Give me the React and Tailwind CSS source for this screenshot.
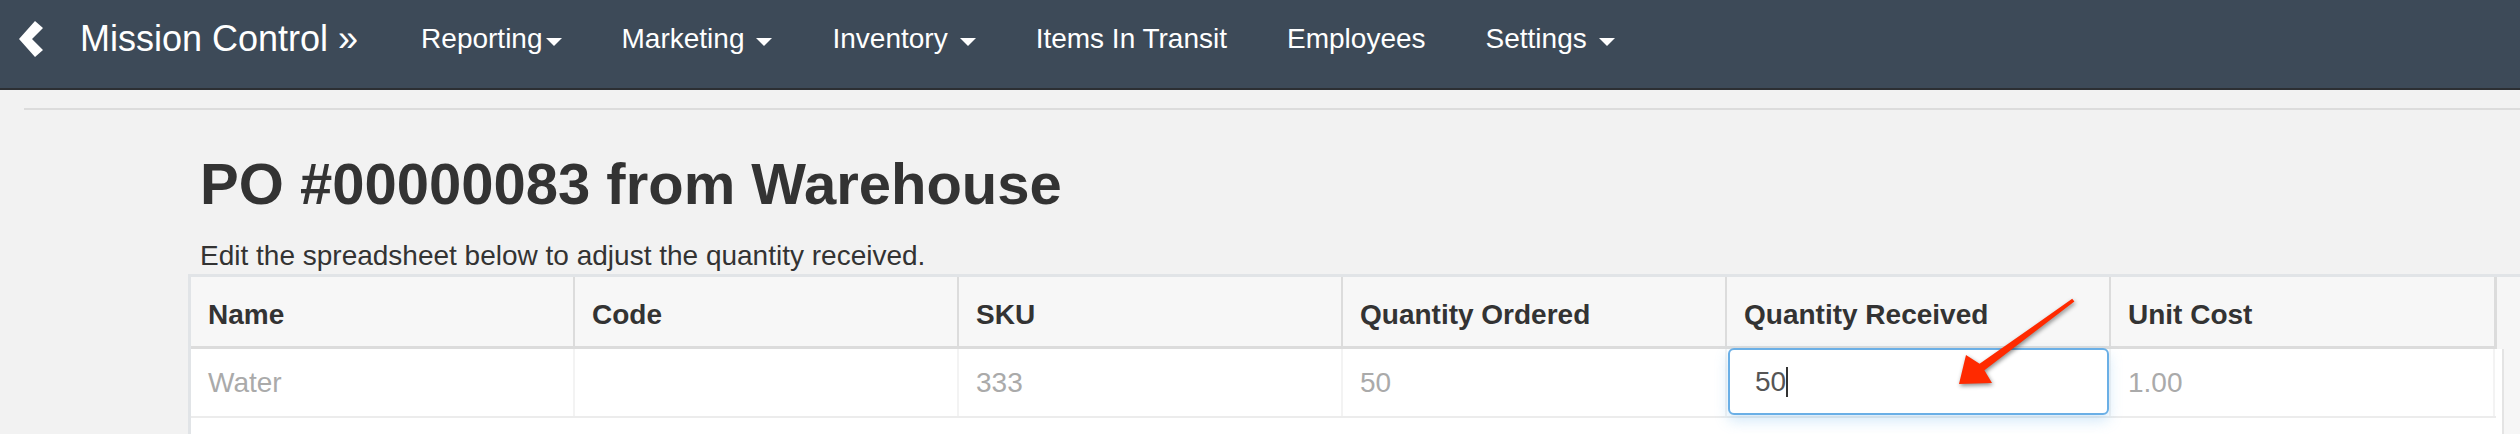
const navItems = [
  { label: "Reporting", caret: "tight" },
  { label: "Marketing", caret: "space" },
  { label: "Inventory", caret: "space" },
  { label: "Items In Transit" },
  { label: "Employees" },
  { label: "Settings", caret: "space" },
];

const columns = ["Name", "Code", "SKU", "Quantity Ordered", "Quantity Received", "Unit Cost"];
const row = ["Water", "", "333", "50", null, "1.00"];

function Caret({ tight }) {
  return (
    <span
      className={`mt-[6px] w-0 h-0 border-l-[8px] border-r-[8px] border-t-[8px] border-l-transparent border-r-transparent border-t-white ${
        tight ? "ml-[3px]" : "ml-[12px]"
      }`}
    />
  );
}

export default function App() {
  return (
    <div className="relative w-full h-[434px] overflow-hidden bg-[#f2f2f2] font-['Liberation_Sans',Arial,sans-serif]">
      {/* navbar */}
      <nav className="h-[90px] bg-[#3d4a58] border-b-2 border-[#2c2f33] flex items-center pb-[11px] text-white">
        <svg width="24" height="36" viewBox="0 0 24 36" className="ml-[19px] shrink-0">
          <polygon points="0,18 16,0 24,7 13,18 24,29 16,36" fill="#fff" />
        </svg>
        <span className="ml-[37px] text-[36px] leading-none whitespace-nowrap">Mission Control »</span>
        <ul className="ml-[33px] flex items-center">
          {navItems.map((item) => (
            <li key={item.label} className="px-[30px] flex items-center text-[28px] leading-[28px] whitespace-nowrap">
              {item.label}
              {item.caret && <Caret tight={item.caret === "tight"} />}
            </li>
          ))}
        </ul>
      </nav>

      <div className="mt-[18px] ml-[24px] h-[2px] bg-[#dcdcdc]" />

      <main className="pl-[188px] text-[#333]">
        <h1 className="pl-[12px] mt-[45px] text-[58px] font-bold leading-none whitespace-nowrap">
          PO #00000083 from Warehouse
        </h1>
        <p className="pl-[12px] mt-[29px] text-[28px] leading-none whitespace-nowrap">
          Edit the spreadsheet below to adjust the quantity received.
        </p>

        {/* spreadsheet */}
        <div className="mt-[4px] border-t-[3px] border-l-[3px] border-[#e1e4e7] bg-[#f6f6f6]">
          <div className="flex h-[72px] w-[2306px] bg-[#f7f7f7] border-b-[3px] border-[#dcdcdc]">
            {columns.map((c, i) => (
              <div
                key={c}
                className={`flex items-center pt-[6px] pl-[17px] text-[28px] font-bold leading-none whitespace-nowrap border-[#dcdcdc] ${
                  i === columns.length - 1 ? "w-[386px] border-r-[3px]" : "w-[384px] border-r-2"
                }`}
              >
                {c}
              </div>
            ))}
          </div>

          <div className="w-[2313px] bg-white border-r-2 border-[#e4e4e4]">
            <div className="flex h-[69px] w-[2305px] border-b-2 border-[#ececec]">
              {row.map((v, i) =>
                v === null ? (
                  <div key={i} className="w-[384px] border-r-2 border-[#f3f3f3]">
                    <div className="w-[381px] h-[67px] ml-[1px] -mt-[1px] rounded-[6px] border-2 border-[#6aafe6] bg-white shadow-[0_6px_14px_rgba(102,175,233,0.28)] flex items-center pl-[25px] text-[28px] leading-none text-[#555]">
                      50
                      <span className="w-[2px] h-[30px] bg-[#333]" />
                    </div>
                  </div>
                ) : (
                  <div
                    key={i}
                    className="w-[384px] flex items-center pl-[17px] text-[28px] leading-none text-[#aaa] border-r-2 border-[#f3f3f3]"
                  >
                    {v}
                  </div>
                )
              )}
            </div>
            <div className="h-[40px]" />
          </div>
        </div>
      </main>

      {/* annotation arrow */}
      <svg
        width="150"
        height="110"
        viewBox="0 0 150 110"
        className="absolute left-[1940px] top-[290px] drop-shadow-[1px_2px_2px_rgba(0,0,0,0.45)]"
      >
        <polygon
          points="19,94 26,65 39.6,73.8 132.2,8.8 134.4,11.6 44.4,80.2 52,93"
          fill="#ff2a00"
        />
      </svg>
    </div>
  );
}
